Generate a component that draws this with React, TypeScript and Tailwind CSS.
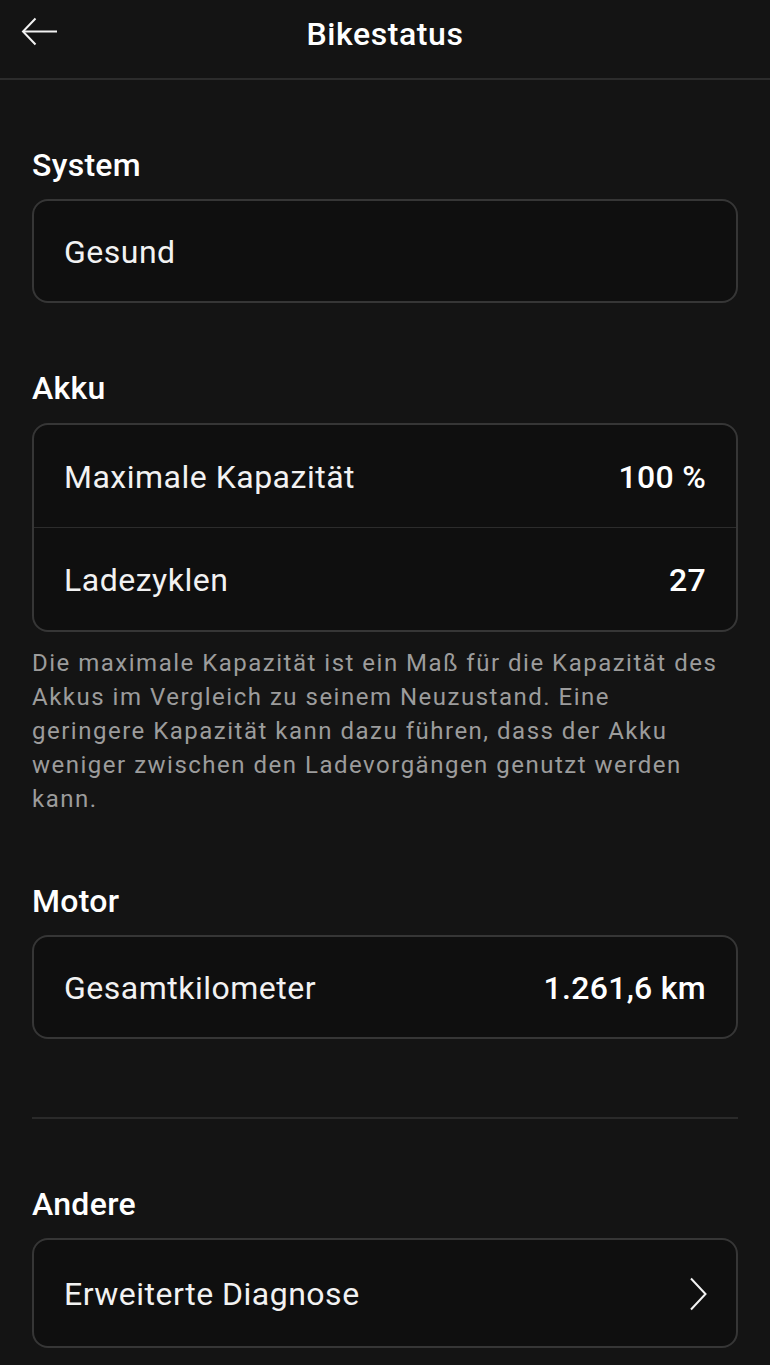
import React from 'react';

const font = { fontFamily: 'Roboto, "Liberation Sans", sans-serif' };

const Label: React.FC<{ children: React.ReactNode; className?: string }> = ({ children, className = '' }) => (
  <h2 className={`text-[32px] leading-[40px] font-medium tracking-[0.3px] text-white ${className}`}>{children}</h2>
);

const Row: React.FC<{ label: string; value?: string; chevron?: boolean; h: string }> = ({ label, value, chevron, h }) => (
  <div className={`flex items-center justify-between pl-[30px] pr-[30px] pt-[2px] ${h}`}>
    <span className="text-[32px] tracking-[0.5px] text-[#f2f2f2]">{label}</span>
    {value && <span className="text-[32px] font-medium tracking-[0.3px] text-white">{value}</span>}
    {chevron && (
      <svg width="20" height="34" viewBox="0 0 20 34" fill="none" stroke="#f2f2f2" strokeWidth="2" className="mr-[-2px]">
        <path d="M3 1.5 L17.5 17 L3 32.5" />
      </svg>
    )}
  </div>
);

const Card: React.FC<{ children: React.ReactNode; className?: string }> = ({ children, className = '' }) => (
  <div className={`rounded-2xl border-2 border-[#363636] bg-[#0f0f0f] ${className}`}>{children}</div>
);

export default function App() {
  return (
    <div className="min-h-screen bg-[#141414] w-[770px]" style={font}>
      <header className="relative h-[80px] border-b-2 border-[#2c2c2c] flex items-center justify-center">
        <svg width="37" height="29" viewBox="0 0 37 29" fill="none" stroke="#f2f2f2" strokeWidth="2" className="absolute left-[21px] top-[17px]">
          <path d="M36 14.5 H2.5" />
          <path d="M14.5 1.5 L2 14.5 L14.5 27.5" />
        </svg>
        <h1 className="text-[32px] font-medium tracking-[0.6px] text-white -mt-[10px]">Bikestatus</h1>
      </header>

      <main className="px-8">
        <Label className="mt-[65px]">System</Label>
        <Card className="mt-[14px]">
          <Row label="Gesund" h="h-[100px]" />
        </Card>

        <Label className="mt-[65px]">Akku</Label>
        <Card className="mt-[15px]">
          <Row label="Maximale Kapazität" value="100 %" h="h-[102px]" />
          <div className="h-px bg-[#2c2c2c]" />
          <Row label="Ladezyklen" value="27" h="h-[102px]" />
        </Card>
        <p className="mt-[14px] text-[24px] leading-[34px] tracking-[1.5px] text-[#9c9c9c]">
          Die maximale Kapazität ist ein Maß für die Kapazität des<br />
          Akkus im Vergleich zu seinem Neuzustand. Eine<br />
          geringere Kapazität kann dazu führen, dass der Akku<br />
          weniger zwischen den Ladevorgängen genutzt werden<br />
          kann.
        </p>

        <Label className="mt-[65px]">Motor</Label>
        <Card className="mt-[14px]">
          <Row label="Gesamtkilometer" value="1.261,6 km" h="h-[100px]" />
        </Card>

        <div className="mt-[78px] h-[2px] bg-[#2a2a2a]" />

        <Label className="mt-[65px]">Andere</Label>
        <Card className="mt-[14px]">
          <Row label="Erweiterte Diagnose" chevron h="h-[106px]" />
        </Card>
      </main>
    </div>
  );
}
